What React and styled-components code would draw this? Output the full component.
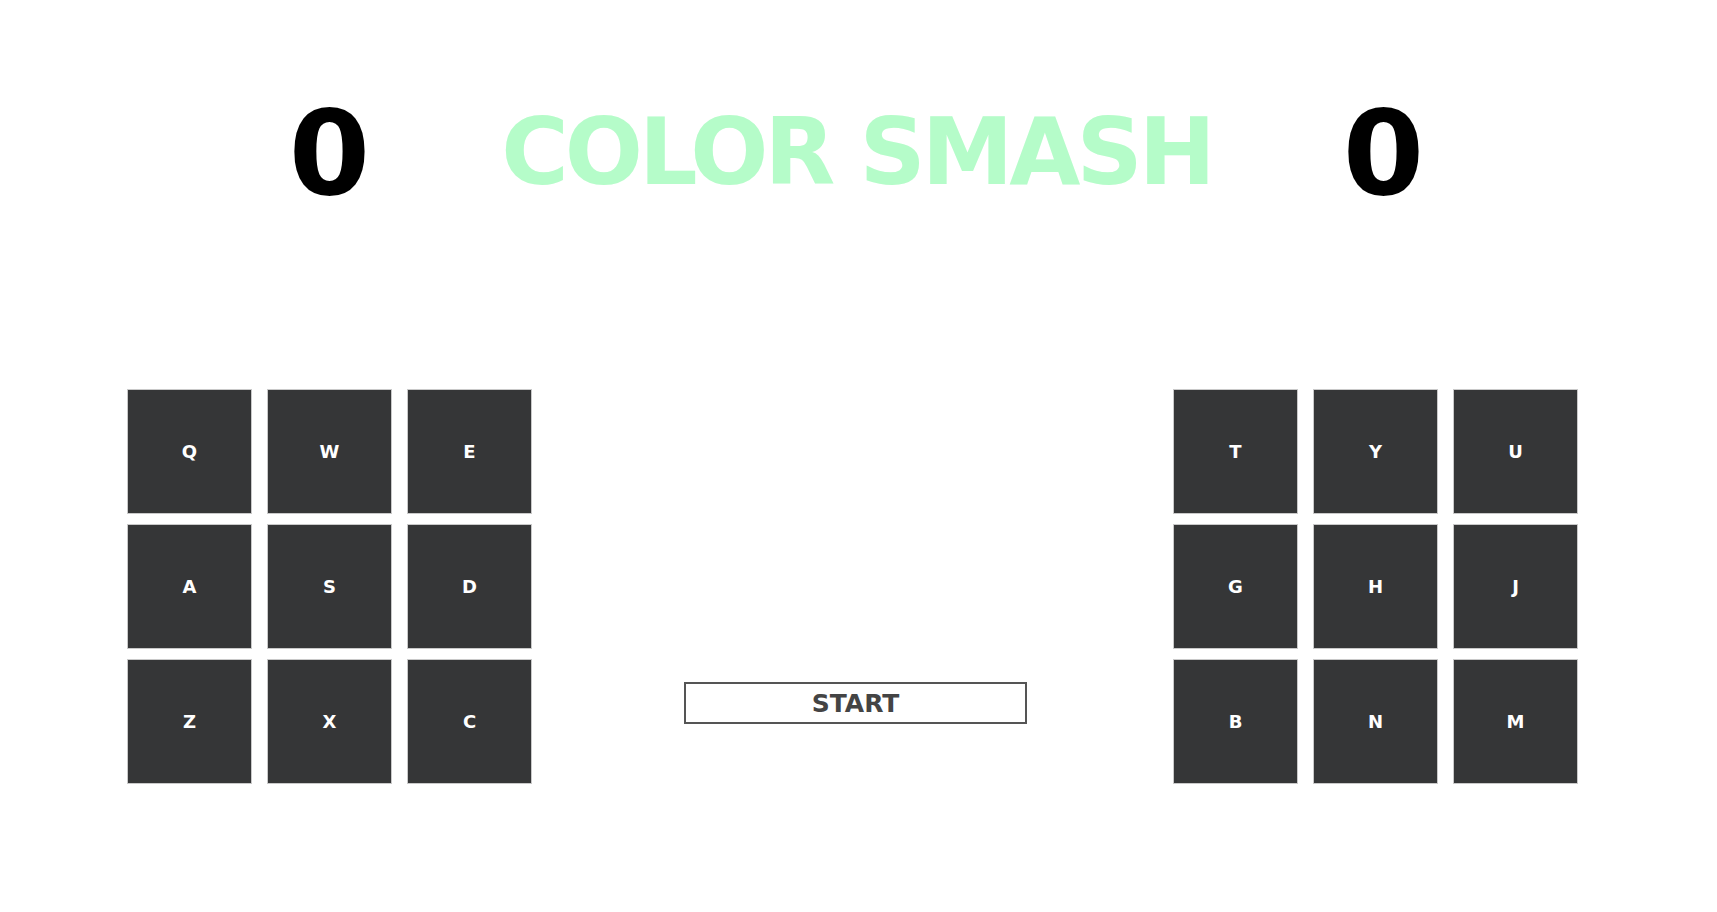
import styled, { createGlobalStyle } from "styled-components";

const GlobalStyle = createGlobalStyle`
  html, body {
    margin: 0;
    padding: 0;
    background: #ffffff;
  }
  body {
    font-family: "DejaVu Sans", "Liberation Sans", sans-serif;
  }
`;

const leftKeys = ["Q", "W", "E", "A", "S", "D", "Z", "X", "C"];
const rightKeys = ["T", "Y", "U", "G", "H", "J", "B", "N", "M"];

function App() {
  return (
    <>
      <GlobalStyle />
      <Page>
        <Header>
          <Score>0</Score>
          <Title>COLOR SMASH</Title>
          <Score $shift={8}>0</Score>
        </Header>

        <Board>
          <KeyGrid>
            {leftKeys.map((key) => (
              <Key key={key}>{key}</Key>
            ))}
          </KeyGrid>

          <Middle>
            <StartButton>START</StartButton>
          </Middle>

          <KeyGrid>
            {rightKeys.map((key) => (
              <Key key={key}>{key}</Key>
            ))}
          </KeyGrid>
        </Board>
      </Page>
    </>
  );
}

export default App;

const Page = styled.div`
  width: 1717px;
  height: 912px;
  box-sizing: border-box;
  padding: 0 139px 0 127px;
  display: flex;
  flex-direction: column;
  overflow: hidden;
`;

const Header = styled.header`
  display: grid;
  grid-template-columns: 405px minmax(0, 1fr) 405px;
  align-items: center;
  height: 120px;
  margin-top: 93px;
`;

const Score = styled.div`
  font-size: 117px;
  font-weight: 700;
  color: #000;
  text-align: center;
  line-height: 1;
  position: relative;
  left: ${(p) => p.$shift || 0}px;
`;

const Title = styled.h1`
  margin: 0;
  display: flex;
  justify-content: center;
  white-space: nowrap;
  font-size: 92px;
  font-weight: 700;
  letter-spacing: -4px;
  color: #b5fcc9;
  line-height: 1;
  position: relative;
  left: 4px;
`;

const Board = styled.main`
  display: flex;
  justify-content: space-between;
  margin-top: 176px;
`;

const KeyGrid = styled.div`
  display: grid;
  grid-template-columns: repeat(3, 125px);
  grid-auto-rows: 125px;
  column-gap: 15px;
  row-gap: 10px;
`;

const Key = styled.div`
  box-sizing: border-box;
  display: flex;
  align-items: center;
  justify-content: center;
  background: #353637;
  border: 1px solid #c9c9c9;
  color: #fff;
  font-size: 18px;
  font-weight: 700;
`;

const Middle = styled.div`
  flex: 1;
  display: flex;
  justify-content: center;
  align-items: flex-start;
  padding-top: 293px;
  padding-left: 6px;
`;

const StartButton = styled.button`
  width: 343px;
  height: 42px;
  box-sizing: border-box;
  background: #fff;
  border: 2px solid #555;
  color: #444;
  font-family: "DejaVu Sans", "Liberation Sans", sans-serif;
  font-size: 25px;
  font-weight: 700;
  padding: 0;
  cursor: pointer;
`;
